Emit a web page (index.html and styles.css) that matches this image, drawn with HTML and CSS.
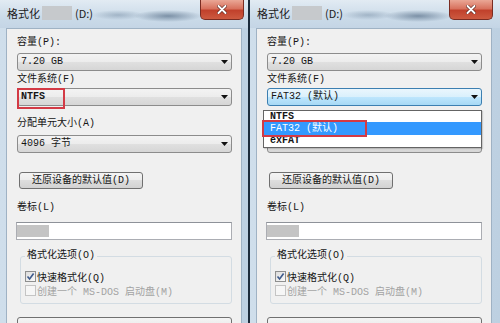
FILE: index.html
```html
<!DOCTYPE html>
<html lang="zh">
<head>
<meta charset="utf-8">
<title>格式化</title>
<link rel="stylesheet" href="styles.css">
</head>
<body>
<div class="screen">
  <div class="dialog left">
    <div class="titlebar">
      <span class="title">格式化</span><span class="blur-name"></span><span class="title drive">(D:)</span>
      <div class="close"><svg width="10" height="9" viewBox="0 0 10 9"><path d="M1.5 1 L8.5 8 M8.5 1 L1.5 8" stroke="#5a1f17" stroke-width="3.2" stroke-linecap="round"/><path d="M1.5 1 L8.5 8 M8.5 1 L1.5 8" stroke="#fff" stroke-width="2" stroke-linecap="round"/></svg></div>
    </div>
    <div class="client">
      <div class="lbl l1">容量(P):</div>
      <div class="combo c1"><span class="val">7.20 GB</span><svg class="arrow" width="7" height="4" viewBox="0 0 7 4"><path d="M0 0 H7 L3.5 4 Z" fill="#111"/></svg></div>
      <div class="lbl l2">文件系统(F)</div>
      <div class="combo c2"><span class="val bold">NTFS</span><svg class="arrow" width="7" height="4" viewBox="0 0 7 4"><path d="M0 0 H7 L3.5 4 Z" fill="#111"/></svg><div class="redbox ntfs-mark"></div></div>
      <div class="lbl l3">分配单元大小(A)</div>
      <div class="combo c3"><span class="val">4096 字节</span><svg class="arrow" width="7" height="4" viewBox="0 0 7 4"><path d="M0 0 H7 L3.5 4 Z" fill="#111"/></svg></div>
      <div class="btn restore">还原设备的默认值(D)</div>
      <div class="lbl l4">卷标(L)</div>
      <div class="textbox"><span class="blur-label"></span></div>
      <fieldset class="group">
        <legend>格式化选项(O)</legend>
        <div class="check-row"><span class="checkbox checked"><svg width="9" height="9" viewBox="0 0 9 9"><path d="M1.5 4.5 L3.6 7 L7.6 1.5" fill="none" stroke="#3d5a8c" stroke-width="1.6"/></svg></span><span>快速格式化(Q)</span></div>
        <div class="check-row disabled"><span class="checkbox"></span><span>创建一个 MS-DOS 启动盘(M)</span></div>
      </fieldset>
      <div class="btn bottom-btn"></div>
    </div>
  </div>
  <div class="divider"></div>
  <div class="dialog right">
    <div class="titlebar">
      <span class="title">格式化</span><span class="blur-name"></span><span class="title drive">(D:)</span>
      <div class="close"><svg width="10" height="9" viewBox="0 0 10 9"><path d="M1.5 1 L8.5 8 M8.5 1 L1.5 8" stroke="#5a1f17" stroke-width="3.2" stroke-linecap="round"/><path d="M1.5 1 L8.5 8 M8.5 1 L1.5 8" stroke="#fff" stroke-width="2" stroke-linecap="round"/></svg></div>
    </div>
    <div class="client">
      <div class="lbl l1">容量(P):</div>
      <div class="combo c1"><span class="val">7.20 GB</span><svg class="arrow" width="7" height="4" viewBox="0 0 7 4"><path d="M0 0 H7 L3.5 4 Z" fill="#111"/></svg></div>
      <div class="lbl l2">文件系统(F)</div>
      <div class="combo c2 focused"><span class="val">FAT32 (默认)</span><svg class="arrow" width="7" height="4" viewBox="0 0 7 4"><path d="M0 0 H7 L3.5 4 Z" fill="#111"/></svg>
        <div class="droplist">
          <div class="opt first bold">NTFS</div>
          <div class="opt selected">FAT32 (默认)</div>
          <div class="opt last bold">exFAT</div>
          <div class="redbox fat-mark"></div>
        </div>
      </div>
      <div class="lbl l3 covered">分配单元大小(A)</div>
      <div class="combo c3"><span class="val covered">4096 字节</span><svg class="arrow" width="7" height="4" viewBox="0 0 7 4"><path d="M0 0 H7 L3.5 4 Z" fill="#111"/></svg></div>
      <div class="btn restore">还原设备的默认值(D)</div>
      <div class="lbl l4">卷标(L)</div>
      <div class="textbox"><span class="blur-label"></span></div>
      <fieldset class="group">
        <legend>格式化选项(O)</legend>
        <div class="check-row"><span class="checkbox checked"><svg width="9" height="9" viewBox="0 0 9 9"><path d="M1.5 4.5 L3.6 7 L7.6 1.5" fill="none" stroke="#3d5a8c" stroke-width="1.6"/></svg></span><span>快速格式化(Q)</span></div>
        <div class="check-row disabled"><span class="checkbox"></span><span>创建一个 MS-DOS 启动盘(M)</span></div>
      </fieldset>
      <div class="btn bottom-btn"></div>
    </div>
  </div>
</div>
</body>
</html>
```
FILE: styles.css
```css
* { box-sizing: border-box; }
html, body { margin: 0; padding: 0; }
body {
  width: 500px;
  height: 323px;
  overflow: hidden;
  background: #c3d4e4;
  font-family: "Liberation Mono", "Noto Sans CJK SC", monospace;
  font-size: 10px;
  color: #151515;
}
.screen { display: flex; height: 323px; }

.dialog {
  flex: none;
  width: 248px;
  height: 323px;
  padding: 0 6px;
  display: flex;
  flex-direction: column;
  background: linear-gradient(90deg, #cfdeeb, #c6d7e7 50%, #bdd0e1);
}
.dialog.right { width: 250px; padding-right: 8px; }
.divider { flex: none; width: 2px; background: #1c2b3b; }

.titlebar {
  flex: none;
  height: 28px;
  margin: 0 -6px;
  padding-left: 7px;
  display: flex;
  align-items: flex-start;
  background:
    radial-gradient(ellipse 34px 6px at 168px 16px, rgba(70, 95, 122, 0.6), rgba(70, 95, 122, 0)),
    radial-gradient(ellipse 26px 5px at 118px 15px, rgba(95, 120, 145, 0.4), rgba(95, 120, 145, 0)),
    linear-gradient(#e2ebf3, #cbdbe9 60%, #c4d5e5);
}
.dialog.right .titlebar { margin-right: -8px; }
.title {
  font-family: "Noto Sans CJK SC", sans-serif;
  font-size: 11px;
  line-height: 14px;
  margin-top: 6px;
  color: #1a1a1a;
}
.blur-name {
  width: 30px;
  height: 14px;
  margin: 6px 0 0 2px;
  background: #c6c9cc;
  filter: blur(0.6px);
}
.drive { margin-left: 3px; }
.close {
  margin-left: auto;
  margin-right: 4px;
  width: 44px;
  height: 20px;
  border: 1px solid #7a2c22;
  border-top: none;
  border-radius: 0 0 5px 5px;
  background: linear-gradient(#eaa796, #d8725e 45%, #c1412c 55%, #cd5a40);
  display: flex;
  align-items: center;
  justify-content: center;
}
.dialog.right .close { margin-right: 7px; }

.client {
  flex: 1;
  background: #f0f0f0;
  border: 1px solid #9fb2c4;
  border-bottom: none;
  padding: 8px 9px 0 10px;
  display: flex;
  flex-direction: column;
  align-items: flex-start;
}
.lbl { height: 12px; line-height: 12px; white-space: nowrap; }
.l2 { margin-top: 3px; }
.l3 { margin-top: 12px; }
.l4 { margin-top: 13px; }
.covered { visibility: hidden; }

.combo {
  position: relative;
  width: 215px;
  height: 18px;
  border: 1px solid #8c8c8c;
  border-radius: 3px;
  background: linear-gradient(#f3f3f3, #ececec 50%, #e0e0e0 50%, #d6d6d6);
  display: flex;
  align-items: center;
  padding-left: 3px;
}
.c1 { margin-top: 4px; }
.c2 { margin-top: 2px; }
.c3 { margin-top: 5px; }
.combo.focused {
  border-color: #3c7fb1;
  background: linear-gradient(#eaf6fd, #d9f0fc 50%, #bee6fd 50%, #a7d9f5);
}
.val { line-height: 12px; white-space: nowrap; }
.bold { font-weight: bold; }
.arrow { margin-left: auto; margin-right: 3px; }

.redbox {
  position: absolute;
  border: 2px solid #d33a45;
}
.ntfs-mark { left: -1px; top: -1px; width: 48px; height: 21px; }

.droplist {
  position: absolute;
  z-index: 5;
  top: 21px;
  left: -5px;
  right: -1px;
  background: #fff;
  border: 1px solid #646464;
  box-shadow: 1px 1px 1px rgba(0, 0, 0, 0.15);
}
.opt {
  line-height: 12px;
  padding-left: 6px;
  white-space: nowrap;
}
.opt.first { height: 11px; line-height: 11px; }
.opt.selected { height: 13px; line-height: 13px; background: #3399ff; color: #fff; }
.opt.last { height: 12px; }
.fat-mark { left: -2px; top: 9px; width: 105px; height: 17px; }

.btn {
  height: 17px;
  border: 1px solid #707070;
  border-radius: 3px;
  background: linear-gradient(#f4f4f4, #ececec 50%, #dedede 50%, #d2d2d2);
  display: flex;
  align-items: center;
  justify-content: center;
  line-height: 12px;
  white-space: nowrap;
}
.restore { margin-top: 19px; margin-left: 2px; width: 124px; }
.bottom-btn { margin-top: 13px; width: 215px; }

.textbox {
  margin-top: 8px;
  margin-left: -1px;
  width: 216px;
  height: 18px;
  border: 1px solid #abadb3;
  border-top-color: #8e9299;
  background: #fff;
  padding: 2px 0 0 0;
}
.blur-label { display: block; width: 32px; height: 12px; background: #c4c4c4; }

.group {
  margin: 10px 0 0 3px;
  padding: 7px 4px 6px;
  width: 212px;
  min-width: 0;
  border: 1px solid #d3dce3;
  border-radius: 3px;
}
.group legend {
  padding: 0 2px;
  line-height: 12px;
  height: 12px;
}
.check-row {
  height: 14px;
  display: flex;
  align-items: center;
  gap: 1px;
  white-space: nowrap;
}
.checkbox {
  width: 11px;
  height: 11px;
  border: 1px solid #8e8f8f;
  background: linear-gradient(135deg, #dcdcdc, #fbfbfb);
  display: flex;
  align-items: center;
  justify-content: center;
}
.check-row.disabled { color: #a3a3a3; }
.check-row.disabled .checkbox { border-color: #c4c4c4; background: #f6f6f6; }
```
